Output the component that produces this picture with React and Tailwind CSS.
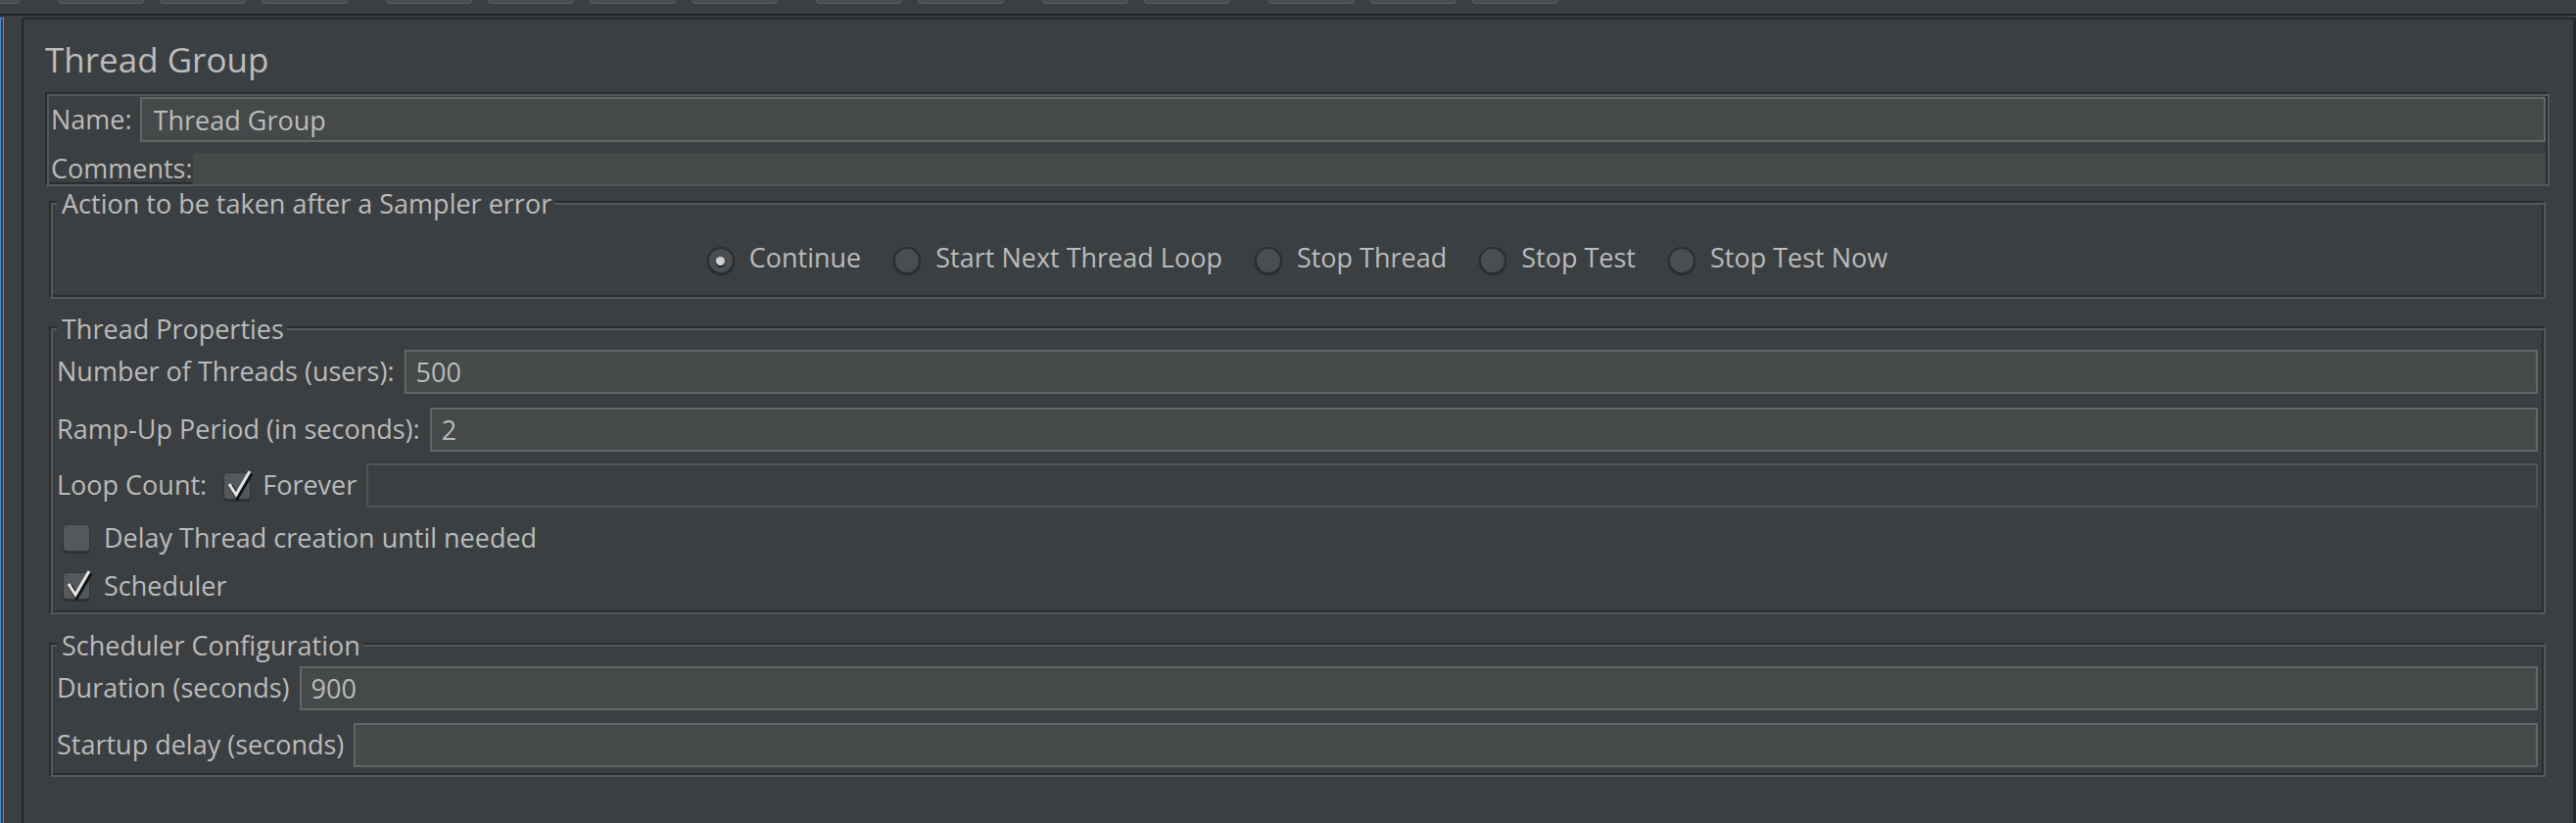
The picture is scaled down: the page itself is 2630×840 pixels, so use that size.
import React from 'react';

const toolbarGroups = [1, 3, 4, 2, 2, 3];

function ToolButton({ first }) {
    return (
        <div className={`${first ? 'w-[20px] rounded-br-[4px] border-l-0' : 'w-[88px] rounded-b-[4px]'} h-[4px] bg-[#4a4d4f] border border-t-0 border-[#5a5d5f]`} />
    );
}

function Radio({ checked, label }) {
    return (
        <div className="flex items-start h-[30px]">
            <div className="mt-[4px] w-[28px] h-[28px] rounded-full bg-[#4b4e50] border-2 border-[#2c2e30] shadow-[0_1px_1px_#25272a] flex items-center justify-center">
                {checked && <div className="w-[9px] h-[9px] rounded-full bg-[#cfcfcf] shadow-[0_2px_0_#1e1f21]" />}
            </div>
            <span className="ml-[15px] leading-[30px]">{label}</span>
        </div>
    );
}

function Checkbox({ checked }) {
    return (
        <div className="relative w-[28px] h-[28px] shrink-0 rounded-[4px] bg-[#55585a] border border-[#333537] shadow-[0_2px_0_#2e3032]">
            {checked && (
                <svg viewBox="0 0 28 28" className="absolute left-0 top-0 w-[28px] h-[28px] overflow-visible">
                    <path d="M6 12 L12.5 23 L26.5 -1" fill="none" stroke="#111213" strokeWidth="4.5" strokeLinejoin="miter" transform="translate(0.8 1.2)" />
                    <path d="M5 11 L12 22 L26 -2" fill="none" stroke="#e4e4e4" strokeWidth="3" strokeLinejoin="miter" />
                </svg>
            )}
        </div>
    );
}

function Field({ value, disabled, className = '' }) {
    return (
        <input
            readOnly
            value={value || ''}
            className={`h-[45px] flex-1 min-w-0 border-2 pl-[10px] outline-none leading-[41px] ${disabled ? 'bg-[#3c3f41] border-[#515355]' : 'bg-[#45494a] border-[#636566]'} ${className}`}
        />
    );
}

// etched border: dark line then light line, like a Swing EtchedBorder
const etched = 'border-2 border-t-[#2a2c2e] border-l-[#2a2c2e] border-r-[#555859] border-b-[#555859] shadow-[inset_2px_2px_0_#555859,inset_-2px_-2px_0_#2a2c2e]';

function Group({ title, className = '', children }) {
    return (
        <fieldset className={`${etched} mx-[4px] px-[6px] min-w-0 ${className}`}>
            <legend className="pl-[5px] pr-[3px] pt-[4px] leading-[28px] bg-[#3c3f41]">{title}</legend>
            {children}
        </fieldset>
    );
}

export default function App() {
    return (
        <div className="w-[2630px] min-h-[840px] flex flex-col bg-[#3c3f41] text-[#bbbbbb] text-[27px] font-['Open_Sans',sans-serif] overflow-hidden">
            {/* Toolbar (mostly scrolled out of view) */}
            <div className="h-[14px] flex items-start">
                <ToolButton first />
                {toolbarGroups.slice(1).map((count, gi) => (
                    <div key={gi} className="flex gap-[16px] ml-[39px]">
                        {Array.from({ length: count }).map((_, i) => <ToolButton key={i} />)}
                    </div>
                ))}
            </div>
            <div className="h-[2px] bg-[#222426]" />

            <div className="flex flex-1 pt-[2px]">
                {/* edge of the tree pane, selected row */}
                <div className="w-[22px] shrink-0">
                    <div className="w-[4px] h-full border-t border-x border-[#4a8fd9]" />
                </div>

                {/* Editor panel */}
                <div className="flex-1 border-l-2 border-t-2 border-r-[3px] border-[#26282a] pl-[22px] pr-[24px]">
                    <div className="mt-[21px] h-[40px] leading-[40px] text-[35px] text-[#bcbcbc]">Thread Group</div>

                    <div className={`${etched} mt-[13px] pl-[2px] pr-[2px] pt-[3px]`}>
                        <div className="flex items-center h-[46px]">
                            <span className="pl-[2px] pr-[8px]">Name:</span>
                            <Field value="Thread Group" className="h-[46px] pl-[12px]" />
                        </div>
                        <div className="flex items-center h-[32px] mt-[11px]">
                            <span className="pl-[2px]">Comments:</span>
                            <div className="flex-1 h-full bg-[#45494a]" />
                        </div>
                    </div>

                    <Group title="Action to be taken after a Sampler error" className="pt-[26px] pb-[25px]">
                        <div className="flex justify-center gap-[33px]">
                            <Radio checked label="Continue" />
                            <Radio label="Start Next Thread Loop" />
                            <Radio label="Stop Thread" />
                            <Radio label="Stop Test" />
                            <Radio label="Stop Test Now" />
                        </div>
                    </Group>

                    <Group title="Thread Properties" className="mt-[13px] pt-[7px] pb-[12px]">
                        <div className="flex items-center h-[45px]">
                            <span className="pr-[10px]">Number of Threads (users):</span>
                            <Field value="500" />
                        </div>
                        <div className="flex items-center h-[45px] mt-[14px]">
                            <span className="pr-[10px]">Ramp-Up Period (in seconds):</span>
                            <Field value="2" />
                        </div>
                        <div className="flex items-center h-[45px] mt-[12px]">
                            <span className="pr-[17px]">Loop Count:</span>
                            <Checkbox checked />
                            <span className="ml-[12px] pr-[10px]">Forever</span>
                            <Field disabled />
                        </div>
                        <div className="flex items-center h-[30px] mt-[16px] pl-[6px]">
                            <Checkbox />
                            <span className="ml-[14px]">Delay Thread creation until needed</span>
                        </div>
                        <div className="flex items-center h-[30px] mt-[19px] pl-[6px]">
                            <Checkbox checked />
                            <span className="ml-[14px]">Scheduler</span>
                        </div>
                    </Group>

                    <Group title="Scheduler Configuration" className="mt-[14px] pt-[7px] pb-[8px]">
                        <div className="flex items-center h-[45px]">
                            <span className="pr-[10px]">Duration (seconds)</span>
                            <Field value="900" />
                        </div>
                        <div className="flex items-center h-[45px] mt-[13px]">
                            <span className="pr-[10px]">Startup delay (seconds)</span>
                            <Field />
                        </div>
                    </Group>
                </div>
            </div>
        </div>
    );
}
